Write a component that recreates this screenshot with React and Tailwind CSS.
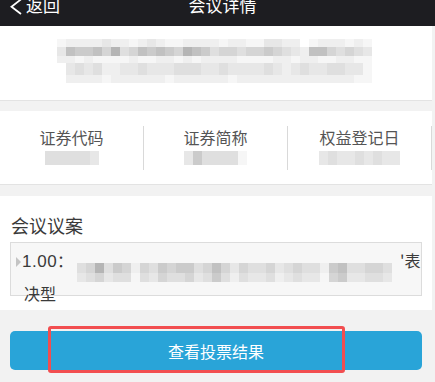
const SHADE = {
  "0": "bg-white",
  "1": "bg-[#f6f6f6]",
  "2": "bg-[#efefef]",
  "3": "bg-[#e7e7e7]",
  "4": "bg-[#dfdfdf]",
  "5": "bg-[#d5d5d5]",
  "6": "bg-[#cbcbcb]",
  "7": "bg-[#c1c1c1]",
  "8": "bg-[#b5b5b5]",
  "9": "bg-[#a8a8a8]",
};

// pixelated (blurred-out) text
const Mosaic = ({ rows, className = "" }) => (
  <div className={"flex flex-col " + className}>
    {rows.map((row, i) => (
      <div key={i} className={"flex " + row.h}>
        {row.s.split("").map((c, j) => (
          <div key={j} className={"w-[9px] shrink-0 " + SHADE[c]} />
        ))}
      </div>
    ))}
  </div>
);

const infoCols = [
  { label: "证券代码", rows: [{ h: "h-[14px]", s: "444443" }] },
  { label: "证券简称", rows: [{ h: "h-[14px]", s: "3644441" }] },
  { label: "权益登记日", rows: [{ h: "h-[14px]", s: "343343433" }] },
];

const App = () => {
  return (
    <div className="w-[435px] h-[382px] overflow-hidden bg-[#f2f2f2] font-['Noto_Sans_CJK_SC',sans-serif]">
      {/* top bar, page is scrolled a bit so it is cut */}
      <div className="h-[26px] overflow-hidden bg-[#1d1d21] text-white">
        <div className="h-[44px] -mt-[18px] grid grid-cols-[1fr_auto_1fr] items-center pl-[10px]">
          <div className="flex items-center gap-[4px]">
            <svg width="12" height="22" viewBox="0 0 12 22" fill="none">
              <path d="M11 6.4 L1.5 13.7 L11 21" stroke="white" strokeWidth="1.8" />
            </svg>
            <span className="text-[17px] leading-none">返回</span>
          </div>
          <span className="text-[17px] leading-none">会议详情</span>
          <div />
        </div>
      </div>

      <div className="pr-[3px]">
        <div className="bg-white border-b border-[#e3e3e3] pt-[13px] pb-[17px]">
          <Mosaic
            className="ml-[57px]"
            rows={[
              { h: "h-[8px]", s: "12222322123211222212211332201222121" },
              { h: "h-[9px]", s: "37667584576765876455455654327754543" },
              { h: "h-[7px]", s: "22121111211221212222111122122112211" },
            ]}
          />
          <Mosaic
            className="ml-[66px]"
            rows={[
              { h: "h-[12px]", s: "3434223343334443343333432343344331" },
              { h: "h-[8px]", s: "2222122222212222221222222222222211" },
            ]}
          />
        </div>

        <div className="mt-[10px] bg-white border-b border-[#e3e3e3] pt-[15px] pb-[14px]">
          <div className="grid grid-cols-3">
            {infoCols.map((c) => (
              <div key={c.label} className="h-[44px] border-r border-[#d9d9d9] flex flex-col items-center">
                <span className="text-[16px] leading-[22px] text-[#555]">{c.label}</span>
                <Mosaic className="mt-[3px]" rows={c.rows} />
              </div>
            ))}
          </div>
        </div>

        <div className="mt-[11px] bg-white pt-[17px] pb-[14px] px-[10px]">
          <h3 className="text-[18px] leading-[24px] text-[#3a3a3a] pl-[1px]">会议议案</h3>
          <div className="mt-[5px] h-[54px] border border-[#dcdcdc] bg-[#f7f7f7] pl-[5px] pt-[6px] text-[16px] leading-[23px] text-[#3a3a3a] whitespace-nowrap">
            <span className="inline-block w-0 h-0 border-y-[5px] border-y-transparent border-l-[5px] border-l-[#c4c4c4] mr-[1px]" />
            <span className="font-['Liberation_Sans',sans-serif] text-[17px] tracking-[0.5px]">1.00</span>
            <span>：</span>
            <Mosaic
              className="inline-flex align-[-6px] ml-[4px]"
              rows={[
                { h: "h-[10px]", s: "45846525465664575354453454426744554" },
                { h: "h-[9px]", s: "34534414354453464243342343315633443" },
              ]}
            />
            <span className="ml-[8px]">'表</span>
            <br />
            <span className="pl-[8px]">决型</span>
          </div>
        </div>

        <div className="relative mt-[21px] mx-[10px]">
          <button className="w-full h-[39px] rounded-[5px] bg-[#29a4d8] text-white text-[16px] flex items-center justify-center">
            查看投票结果
          </button>
          <div className="absolute left-[38px] top-[-5px] w-[297px] h-[47px] border-[3px] border-[#f24e50] rounded-[3px]" />
        </div>
      </div>
    </div>
  );
};

export default App;
